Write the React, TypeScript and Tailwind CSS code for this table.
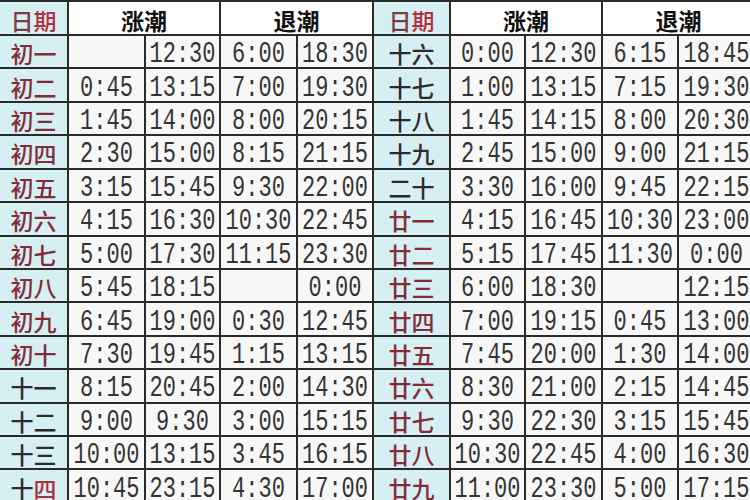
type Row = [string, string, string, string, string]

const LEFT: Row[] = [
  ['初一', '', '12:30', '6:00', '18:30'],
  ['初二', '0:45', '13:15', '7:00', '19:30'],
  ['初三', '1:45', '14:00', '8:00', '20:15'],
  ['初四', '2:30', '15:00', '8:15', '21:15'],
  ['初五', '3:15', '15:45', '9:30', '22:00'],
  ['初六', '4:15', '16:30', '10:30', '22:45'],
  ['初七', '5:00', '17:30', '11:15', '23:30'],
  ['初八', '5:45', '18:15', '', '0:00'],
  ['初九', '6:45', '19:00', '0:30', '12:45'],
  ['初十', '7:30', '19:45', '1:15', '13:15'],
  ['十一', '8:15', '20:45', '2:00', '14:30'],
  ['十二', '9:00', '9:30', '3:00', '15:15'],
  ['十三', '10:00', '13:15', '3:45', '16:15'],
  ['十四', '10:45', '23:15', '4:30', '17:00'],
]

const RIGHT: Row[] = [
  ['十六', '0:00', '12:30', '6:15', '18:45'],
  ['十七', '1:00', '13:15', '7:15', '19:30'],
  ['十八', '1:45', '14:15', '8:00', '20:30'],
  ['十九', '2:45', '15:00', '9:00', '21:15'],
  ['二十', '3:30', '16:00', '9:45', '22:15'],
  ['廿一', '4:15', '16:45', '10:30', '23:00'],
  ['廿二', '5:15', '17:45', '11:30', '0:00'],
  ['廿三', '6:00', '18:30', '', '12:15'],
  ['廿四', '7:00', '19:15', '0:45', '13:00'],
  ['廿五', '7:45', '20:00', '1:30', '14:00'],
  ['廿六', '8:30', '21:00', '2:15', '14:45'],
  ['廿七', '9:30', '22:30', '3:15', '15:45'],
  ['廿八', '10:30', '22:45', '4:00', '16:30'],
  ['廿九', '11:00', '23:30', '5:00', '17:15'],
]

const cjk = "font-['Noto_Sans_CJK_SC',sans-serif]"

// day label colour: 初/廿 maroon, 十/二十 near-black
function dayTone(d: string) {
  if (d.startsWith('初') || d.startsWith('廿')) return 'text-[#832c38]'
  return 'text-[#2f2a2a]'
}

function DayCell({ day }: { day: string }) {
  return (
    <div className={`flex items-center justify-center bg-[#d6eff3] pt-[4px] text-[23px] font-medium leading-none ${cjk} ${dayTone(day)}`}>
      {day === '十四' ? (
        <>
          十<span className="text-[#a8323f]">四</span>
        </>
      ) : (
        day
      )}
    </div>
  )
}

function TimeCell({ t }: { t: string }) {
  return (
    <div className="flex items-center justify-center bg-[#f7f7f7] pt-[7px] font-['Liberation_Mono',monospace] text-[22px] leading-none text-[#333]">
      <span className="inline-block scale-y-[1.35]">{t}</span>
    </div>
  )
}

function HeadCell({ label, span }: { label: string; span?: boolean }) {
  return (
    <div
      className={`flex items-center justify-center bg-white pt-[5px] text-[23px] font-bold leading-none text-[#111] ${cjk} ${
        span ? 'col-span-2' : ''
      }`}
    >
      {label}
    </div>
  )
}

function DateHead() {
  return (
    <div className={`flex items-center justify-center bg-[#d6eff3] pt-[5px] text-[23px] font-medium leading-none ${cjk}`}>
      <span className="text-[#7d3a42]">日</span>
      <span className="text-[#b0303e]">期</span>
    </div>
  )
}

export default function App() {
  return (
    <div className="h-[500px] w-[750px] overflow-hidden bg-[#2a2a2a]">
      <div className="grid w-[754px] grid-cols-[67px_75px_73px_75px_74px_75px_73px_75px_74px_75px] grid-rows-[32px_repeat(14,31.43px)] gap-[2px] pt-[2px]">
        <DateHead />
        <HeadCell label="涨潮" span />
        <HeadCell label="退潮" span />
        <DateHead />
        <HeadCell label="涨潮" span />
        <HeadCell label="退潮" span />
        {LEFT.map((l, i) => {
          const r = RIGHT[i]
          return [
            <DayCell key={`ld${i}`} day={l[0]} />,
            ...l.slice(1).map((t, j) => <TimeCell key={`l${i}-${j}`} t={t} />),
            <DayCell key={`rd${i}`} day={r[0]} />,
            ...r.slice(1).map((t, j) => <TimeCell key={`r${i}-${j}`} t={t} />),
          ]
        })}
      </div>
    </div>
  )
}
